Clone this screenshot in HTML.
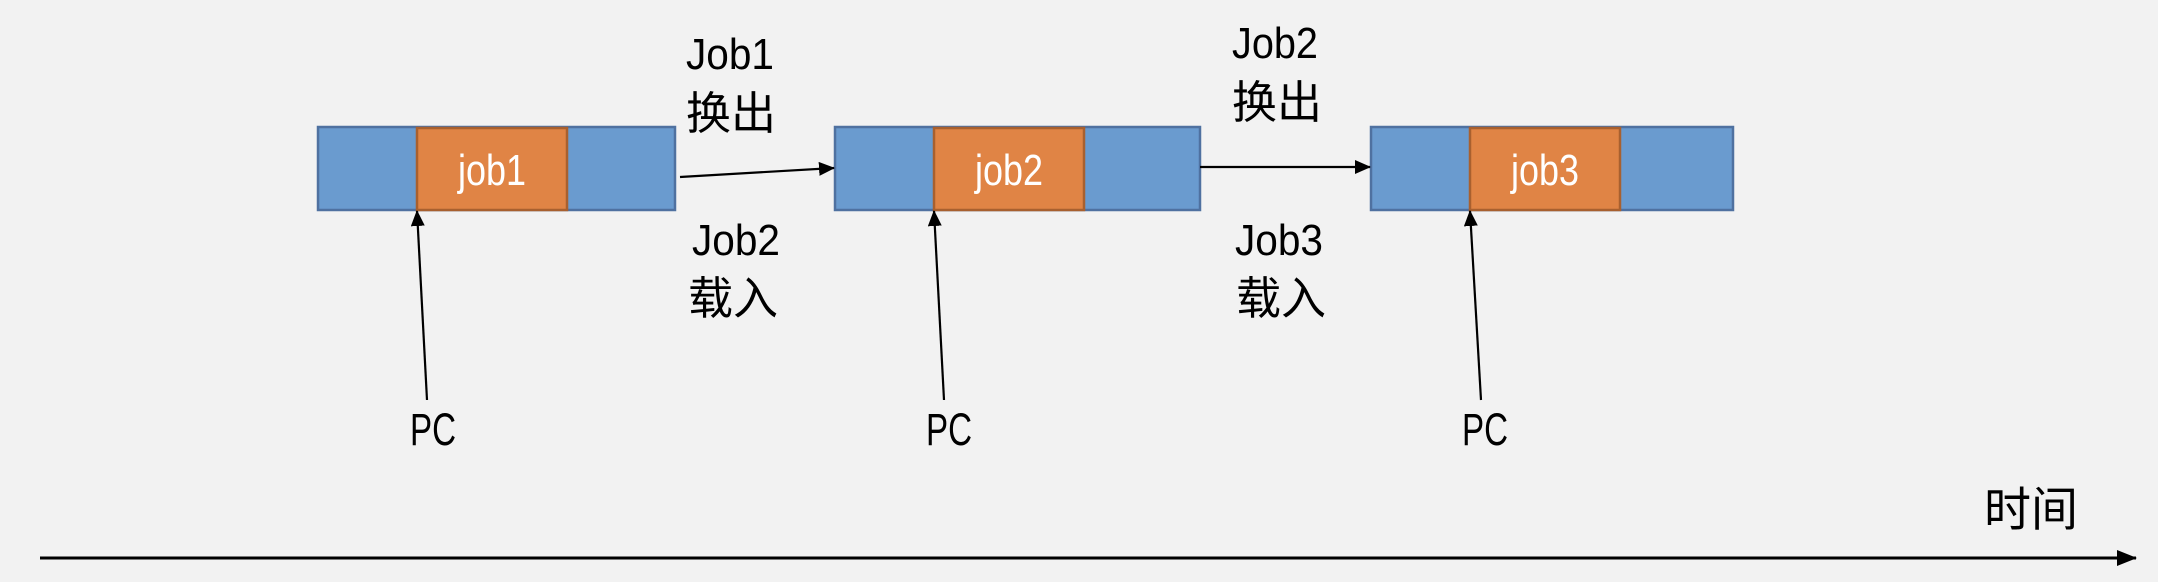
<!DOCTYPE html>
<html><head><meta charset="utf-8"><style>
html,body{margin:0;padding:0;background:#f2f2f2;}
svg{display:block;}
text{font-family:"Liberation Sans","Noto Sans CJK SC",sans-serif;}
</style></head><body>
<svg width="2158" height="582" viewBox="0 0 2158 582" xmlns="http://www.w3.org/2000/svg">
<defs>
<marker id="ah" markerWidth="16" markerHeight="14" refX="15" refY="7" orient="auto" markerUnits="userSpaceOnUse">
<path d="M0,0 L16,7 L0,14 z" fill="#000"/>
</marker>
<marker id="ah2" markerWidth="20" markerHeight="16" refX="19" refY="8" orient="auto" markerUnits="userSpaceOnUse">
<path d="M0,0 L20,8 L0,16 z" fill="#000"/>
</marker>
</defs>
<rect width="2158" height="582" fill="#f2f2f2"/>
<g stroke="#4f71a0" stroke-width="2.5" fill="#6a9bcf">
<rect x="318" y="127" width="357" height="83"/>
<rect x="835" y="127" width="365" height="83"/>
<rect x="1371" y="127" width="362" height="83"/>
</g>
<g stroke="#a8602f" stroke-width="2.5" fill="#e08445">
<rect x="417" y="128" width="150" height="82"/>
<rect x="934" y="128" width="150" height="82"/>
<rect x="1470" y="128" width="150" height="82"/>
</g>
<g fill="#fff" font-size="44">
<text x="458" y="185" textLength="68" lengthAdjust="spacingAndGlyphs">job1</text>
<text x="975" y="185" textLength="68" lengthAdjust="spacingAndGlyphs">job2</text>
<text x="1511" y="185" textLength="68" lengthAdjust="spacingAndGlyphs">job3</text>
</g>
<g stroke="#000" stroke-width="2.2" fill="none">
<line x1="680" y1="177" x2="834" y2="168" marker-end="url(#ah)"/>
<line x1="1200" y1="167" x2="1370" y2="167" marker-end="url(#ah)"/>
<line x1="427" y1="400" x2="417" y2="211" marker-end="url(#ah)"/>
<line x1="944" y1="400" x2="934" y2="211" marker-end="url(#ah)"/>
<line x1="1481" y1="400" x2="1470" y2="211" marker-end="url(#ah)"/>
<line x1="40" y1="558" x2="2136" y2="558" stroke-width="3" marker-end="url(#ah2)"/>
</g>
<g fill="#000" font-size="44">
<text x="686" y="69" textLength="88" lengthAdjust="spacingAndGlyphs">Job1</text>
<text x="686" y="129" font-size="45">换出</text>
<text x="692" y="255" textLength="88" lengthAdjust="spacingAndGlyphs">Job2</text>
<text x="688" y="314" font-size="45">载入</text>
<text x="1232" y="58" textLength="86" lengthAdjust="spacingAndGlyphs">Job2</text>
<text x="1232" y="118" font-size="45">换出</text>
<text x="1235" y="255" textLength="88" lengthAdjust="spacingAndGlyphs">Job3</text>
<text x="1236" y="314" font-size="45">载入</text>
<text x="410" y="445" font-size="45" textLength="46" lengthAdjust="spacingAndGlyphs">PC</text>
<text x="926" y="445" font-size="45" textLength="46" lengthAdjust="spacingAndGlyphs">PC</text>
<text x="1462" y="445" font-size="45" textLength="46" lengthAdjust="spacingAndGlyphs">PC</text>
<text x="1984" y="526" font-size="47">时间</text>
</g>
</svg>
</body></html>
